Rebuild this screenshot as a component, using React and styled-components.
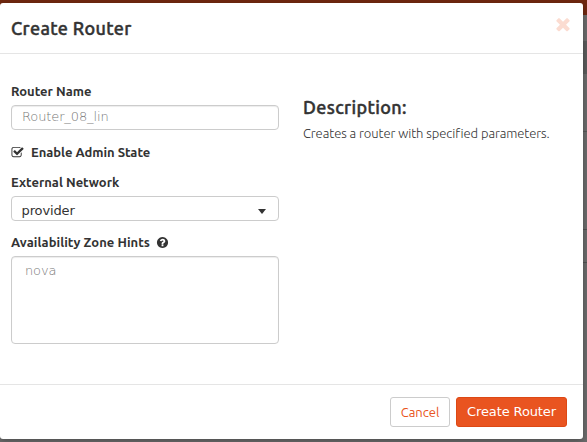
import React from "react";
import styled, { createGlobalStyle } from "styled-components";

const GlobalStyle = createGlobalStyle`
  *, *::before, *::after { box-sizing: border-box; }
  body {
    margin: 0;
    overflow: hidden;
    background: #626160;
    color: #333;
    font: 13px/18px Ubuntu, "Noto Sans", sans-serif;
  }
`;

const Page = styled.div`
  height: 442px;
  padding-top: 3px;
  background:
    linear-gradient(#712810, #712810) 0 0 / 100% 15px no-repeat,
    linear-gradient(#5c5c5c, #5c5c5c) 0 41px / 100% 33px no-repeat,
    linear-gradient(#575757, #575757) 0 131px / 100% 1px no-repeat,
    linear-gradient(#525252, #525252) 0 229px / 100% 1px no-repeat,
    linear-gradient(#525252, #525252) 0 262px / 100% 1px no-repeat,
    #6c6c6c;
`;

const Dialog = styled.form`
  display: flex;
  flex-direction: column;
  width: 583px;
  height: 436px;
  background: #fff;
  border-radius: 3px;
  box-shadow: 0 2px 7px rgba(0, 0, 0, 0.3);
`;

const Header = styled.header`
  display: flex;
  justify-content: space-between;
  align-items: flex-start;
  height: 51px;
  padding: 13px 10px 0 11px;
  border-bottom: 1px solid #e5e5e5;
`;

const Title = styled.h3`
  margin: 0;
  font-size: 18px;
  font-weight: 500;
  line-height: 25px;
  letter-spacing: 0.35px;
  -webkit-text-stroke: 0.45px currentColor;
  white-space: nowrap;
`;

const Close = styled.button`
  display: flex;
  margin-top: -2px;
  padding: 0;
  border: 0;
  background: none;
  color: #fbdcd1;
`;

const Body = styled.div`
  display: grid;
  grid-template-columns: 268px 1fr;
  column-gap: 24px;
  flex: 1;
  padding: 28px 11px 0;
`;

const Fields = styled.div`
  display: flex;
  flex-direction: column;
`;

const Label = styled.label`
  display: flex;
  align-items: center;
  height: 18px;
  margin-bottom: ${(p) => p.$gap || "5px"};
  font-size: 13px;
  font-weight: 700;
  letter-spacing: ${(p) => p.$track || "0"};
  white-space: nowrap;
`;

const Control = styled.div`
  display: flex;
  justify-content: space-between;
  align-items: flex-start;
  height: ${(p) => p.$height || "25px"};
  margin-bottom: ${(p) => p.$gap || "0"};
  padding: ${(p) => p.$pad || "2px 12px 0 10px"};
  border: 1px solid #ccc;
  border-radius: 4px;
  box-shadow: ${(p) => (p.$flat ? "none" : "inset 0 1px 1px rgba(0, 0, 0, 0.075)")};
  color: ${(p) => (p.$muted ? "#777" : "#333")};
  font: ${(p) => (p.$muted ? 200 : 400)} 13px/18px "DejaVu Sans", sans-serif;
  letter-spacing: -0.12px;
`;

const Caret = styled.span`
  margin-top: 7px;
  border: 4.5px solid transparent;
  border-top: 5px solid #333;
  border-bottom: 0;
`;

const Description = styled.section`
  padding-top: 13px;
`;

const Text = styled.p`
  margin: 4px 0 0;
  color: #333;
  font-size: 13px;
  font-weight: 300;
  letter-spacing: -0.06px;
  white-space: nowrap;
`;

const Footer = styled.footer`
  display: flex;
  justify-content: flex-end;
  gap: 6px;
  height: 55px;
  padding: 12px 16px 0;
  border-top: 1px solid #e5e5e5;
`;

const Button = styled.button`
  width: ${(p) => (p.$primary ? "111px" : "60px")};
  height: 30px;
  padding: ${(p) => (p.$primary ? "0 0 2px" : "0")};
  border: 1px solid ${(p) => (p.$primary ? "#dd4814" : "#ccc")};
  border-radius: 3px;
  background: ${(p) => (p.$primary ? "#e95420" : "#fff")};
  color: ${(p) => (p.$primary ? "#fff" : "#e95420")};
  font: ${(p) => (p.$primary ? '13px "DejaVu Sans", sans-serif' : '13px Ubuntu, "Noto Sans", sans-serif')};
  letter-spacing: ${(p) => (p.$primary ? "-0.12px" : "0")};
  white-space: nowrap;
`;

const Svg = styled.svg`
  display: block;
  flex: none;
  margin: ${(p) => p.$margin || "0"};
  fill: currentColor;
`;

const PATHS = {
  check:
    "M1472 930v318q0 119-84.5 203.5t-203.5 84.5h-832q-119 0-203.5-84.5t-84.5-203.5v-832q0-119 84.5-203.5t203.5-84.5h832q63 0 117 25 15 7 18 23 3 17-9 29l-49 49q-10 10-23 10-3 0-9-2-23-6-45-6h-832q-66 0-113 47t-47 113v832q0 66 47 113t113 47h832q66 0 113-47t47-113v-254q0-13 9-22l64-64q10-10 23-10 6 0 12 3 20 8 20 29zm231-489l-814 814q-24 24-57 24t-57-24l-430-430q-24-24-24-57t24-57l110-110q24-24 57-24t57 24l263 263 647-647q24-24 57-24t57 24l110 110q24 24 24 57t-24 57z",
  question:
    "M1024 1376v-192q0-14-9-23t-23-9h-192q-14 0-23 9t-9 23v192q0 14 9 23t23 9h192q14 0 23-9t9-23zm256-672q0-88-55.5-163t-138.5-116-170-41q-243 0-371 213-15 24 8 42l132 100q7 6 19 6 16 0 25-12 53-68 86-92 34-24 86-24 48 0 85.5 26t37.5 59q0 38-20 61t-68 45q-63 28-115.5 86.5t-52.5 125.5v36q0 14 9 23t23 9h192q14 0 23-9t9-23q0-19 21.5-49.5t54.5-49.5q32-18 49-28.5t46-35 44.5-48 28-60.5 12.5-81zm384 192q0 209-103 385.5t-279.5 279.5-385.5 103-385.5-103-279.5-279.5-103-385.5 103-385.5 279.5-279.5 385.5-103 385.5 103 279.5 279.5 103 385.5z",
  close:
    "M1490 1322q0 40-28 68l-136 136q-28 28-68 28t-68-28l-294-294-294 294q-28 28-68 28t-68-28l-136-136q-28-28-28-68t28-68l294-294-294-294q-28-28-28-68t28-68l136-136q28-28 68-28t68 28l294 294 294-294q28-28 68-28t68 28l136 136q28 28 28 68t-28 68l-294 294 294 294q28 28 28 68z",
};

const Icon = ({ name, size, margin }) => (
  <Svg viewBox="0 0 1792 1792" width={size} height={size} $margin={margin} aria-hidden="true">
    <path d={PATHS[name]} />
  </Svg>
);

export default function App() {
  return (
    <Page>
      <GlobalStyle />
      <Dialog>
        <Header>
          <Title>Create Router</Title>
          <Close type="button" aria-label="Close">
            <Icon name="close" size={20} />
          </Close>
        </Header>
        <Body>
          <Fields>
            <Label>Router Name</Label>
            <Control $muted $gap="13px">Router_08_lin</Control>
            <Label $gap="12px" $track="-0.03px">
              <Icon name="check" size={13} margin="0 7px 0 0" />
              Enable Admin State
            </Label>
            <Label>External Network</Label>
            <Control $flat $gap="12px" $pad="5px 12px 0 9.5px">
              provider
              <Caret />
            </Control>
            <Label $track="0.04px">
              Availability Zone Hints
              <Icon name="question" size={13} margin="0 0 0 6px" />
            </Label>
            <Control $muted $height="88px" $pad="5px 13px">nova</Control>
          </Fields>
          <Description>
            <Title as="h4">Description:</Title>
            <Text>Creates a router with specified parameters.</Text>
          </Description>
        </Body>
        <Footer>
          <Button type="button">Cancel</Button>
          <Button type="button" $primary>Create Router</Button>
        </Footer>
      </Dialog>
    </Page>
  );
}
